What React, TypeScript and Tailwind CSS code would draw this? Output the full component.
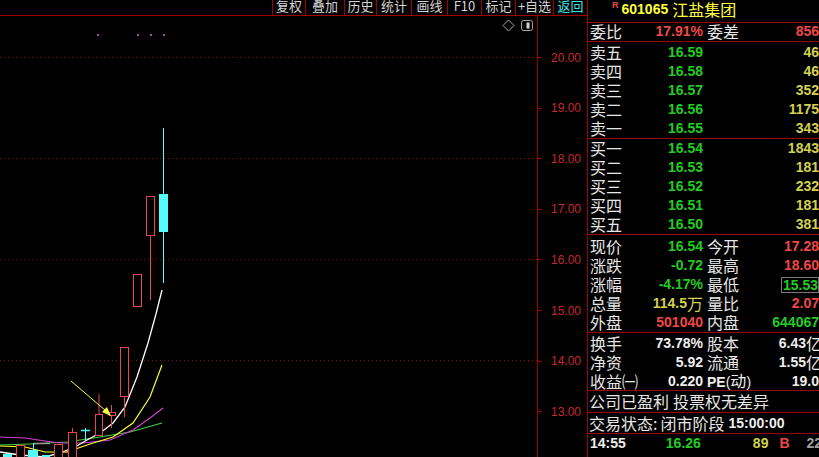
import React from 'react';

const NUM = "font-['Liberation_Sans',Arial,sans-serif] font-bold text-[14px]";

const TOOLS = [
  { label: '复权', cls: 'w-[33px] text-[#d4d4d4]' },
  { label: '叠加', cls: 'w-[39px] text-[#d4d4d4]' },
  { label: '历史', cls: 'w-[32px] text-[#d4d4d4]' },
  { label: '统计', cls: 'w-[35px] text-[#d4d4d4]' },
  { label: '画线', cls: 'w-[36px] text-[#d4d4d4]' },
  { label: 'F10', cls: 'w-[34px] text-[#d4d4d4]' },
  { label: '标记', cls: 'w-[34px] text-[#d4d4d4]' },
  { label: '+自选', cls: 'w-[38px] text-[#d4d4d4]' },
  { label: '返回', cls: 'w-[34px] text-[#3ce6e6]' },
];

const SELL = [
  ['卖五', '16.59', '46'],
  ['卖四', '16.58', '46'],
  ['卖三', '16.57', '352'],
  ['卖二', '16.56', '1175'],
  ['卖一', '16.55', '343'],
];

const BUY = [
  ['买一', '16.54', '1843'],
  ['买二', '16.53', '181'],
  ['买三', '16.52', '232'],
  ['买四', '16.51', '181'],
  ['买五', '16.50', '381'],
];

const AXIS = ['20.00', '19.00', '18.00', '17.00', '16.00', '15.00', '14.00', '13.00'];

// hollow red candles: [x, top, w, h, wickTop, wickBottom, wickX]
const RED_CANDLES = [
  [146.5, 196.5, 8, 39, 196, 300, 150.5],
  [133.5, 274.5, 8, 32, 274, 307, 137.5],
  [120.5, 347.5, 8, 49, 347, 417, 124.5],
  [95.5, 414.5, 7, 21, 394, 436, 99],
  [68.5, 432.5, 8, 30, 428, 462, 72.5],
  [54.5, 444.5, 8, 20, 444, 462, 58.5],
  [16.5, 445.5, 8, 20, 445, 462, 20.5],
];

function Chart() {
  return (
    <svg width="587" height="441" viewBox="0 16 587 441" className="block shrink-0">
      {[57, 158, 259, 360].map(y => (
        <line key={y} x1={0} x2={537} y1={y + 0.5} y2={y + 0.5} stroke="#7a1212" strokeDasharray="1 3" />
      ))}
      <line x1={537.5} x2={537.5} y1={16} y2={457} stroke="#a00000" />
      {AXIS.map((t, i) => {
        const y = 57 + i * 50.6;
        return (
          <g key={t}>
            <line x1={537} x2={542} y1={Math.round(y) + 0.5} y2={Math.round(y) + 0.5} stroke="#a00000" />
            <text x={581} y={y + 4.5} textAnchor="end" fill="#c42a2a" fontSize="12" fontFamily="'Liberation Sans', Arial, sans-serif">{t}</text>
          </g>
        );
      })}

      {/* top-right tool icons */}
      <polygon points="508.5,20 514,25.5 508.5,31 503,25.5" fill="none" stroke="#a8a8a8" />
      <rect x={521.5} y={20.5} width={11} height={10} rx={2} fill="none" stroke="#a8a8a8" />
      <rect x={526.5} y={22.5} width={3} height={6} fill="#d0d0d0" />

      {/* marker dots */}
      {[97, 137, 150, 163].map(x => (
        <rect key={x} x={x} y={34} width={2} height={2} fill="#b040b0" />
      ))}

      {/* moving averages */}
      <polyline fill="none" stroke="#40d040" strokeWidth={1.2}
        points="0,445 30,444 67,442 100,437 130,432 162,423" />
      <polyline fill="none" stroke="#d040d0" strokeWidth={1.2}
        points="0,437 25,438 45,441 60,443 83,443 110,440 133,430 150,418 163,408" />
      <polyline fill="none" stroke="#ffff30" strokeWidth={1.2}
        points="0,446 25,447 45,452 67,452 90,444 113,437 133,423 150,397 162,365" />
      <polyline fill="none" stroke="#ffffff" strokeWidth={1.3}
        points="0,452 20,455 45,457 60,453 75,447 87,440 100,433 113,423 125,407 137,377 148,343 156,314 162,290" />
      <line x1={33} x2={50} y1={443.5} y2={443.5} stroke="#9a9a9a" strokeWidth={1.5} />
      <line x1={65} x2={75} y1={451.5} y2={451.5} stroke="#ff9020" strokeWidth={1.5} />

      {/* red hollow candles */}
      {RED_CANDLES.map(([x, t, w, h, wt, wb, wx], i) => (
        <g key={i} stroke="#e84848" fill="none">
          <line x1={wx} x2={wx} y1={wt} y2={t} />
          <line x1={wx} x2={wx} y1={t + h} y2={wb} />
          <rect x={x} y={t} width={w} height={h} fill="#000" />
        </g>
      ))}
      {/* small doji */}
      <line x1={111.5} x2={111.5} y1={405} y2={428} stroke="#e84848" />
      <rect x={109.5} y={412.5} width={6} height={3} fill="#000" stroke="#e84848" />

      {/* cyan candles */}
      <line x1={163.5} x2={163.5} y1={128} y2={283} stroke="#54fcfc" />
      <rect x={159} y={194} width={9} height={38} fill="#54fcfc" />
      <line x1={81} x2={90} y1={430.5} y2={430.5} stroke="#54fcfc" strokeWidth={1.5} />
      <line x1={85.5} x2={85.5} y1={428} y2={440} stroke="#54fcfc" />
      <line x1={33.5} x2={33.5} y1={443} y2={450} stroke="#54fcfc" />
      <rect x={28} y={450} width={10} height={8} fill="#54fcfc" />
      <rect x={3} y={454} width={9} height={4} fill="#54fcfc" />
      <rect x={42} y={455} width={8} height={3} fill="#54fcfc" />

      {/* arrow */}
      <line x1={71} y1={381} x2={106} y2={411} stroke="#ffff40" />
      <polygon points="111,416 102,412 107,407" fill="#ffff40" />
    </svg>
  );
}

function Num({ children, cls }: { children: React.ReactNode; cls: string }) {
  return <span className={`${NUM} ${cls}`}>{children}</span>;
}

function Pair({ l1, v1, l2, v2 }: { l1: React.ReactNode; v1: React.ReactNode; l2: React.ReactNode; v2: React.ReactNode }) {
  return (
    <div className="flex h-[19px] items-center leading-[19px]">
      <div className="flex w-[115px] items-center justify-between pl-[2px]">
        <span className="text-[16px] text-[#e6e6e6]">{l1}</span>
        {v1}
      </div>
      <div className="ml-[4px] flex flex-1 items-center justify-between whitespace-nowrap">
        <span className="text-[16px] text-[#e6e6e6]">{l2}</span>
        {v2}
      </div>
    </div>
  );
}

function Book({ rows }: { rows: string[][] }) {
  return (
    <>
      {rows.map(([l, p, v]) => (
        <div key={l} className="flex h-[19px] items-center leading-[19px]">
          <div className="flex w-[115px] items-center justify-between pl-[2px]">
            <span className="text-[16px] text-[#e6e6e6]">{l}</span>
            <Num cls="text-[#22cc22]">{p}</Num>
          </div>
          <div className="flex flex-1 justify-end">
            <Num cls="text-[#d2d24e]">{v}</Num>
          </div>
        </div>
      ))}
    </>
  );
}

export default function App() {
  return (
    <div className="flex h-[457px] w-[819px] overflow-hidden bg-black font-['Noto_Sans_CJK_SC',sans-serif]">
      {/* chart side */}
      <div className="flex w-[587px] shrink-0 flex-col">
        <div className="flex h-[16px] shrink-0 justify-end border-b border-[#a00000]">
          {TOOLS.map(t => (
            <div key={t.label} className={`flex h-full items-start justify-center border-l border-[#a00000] text-[13px] leading-[12px] ${t.cls}`}>
              {t.label}
            </div>
          ))}
        </div>
        <Chart />
      </div>

      {/* quote panel */}
      <div className="flex w-[232px] shrink-0 flex-col overflow-hidden border-l border-[#a00000]">
        <div className="flex h-[23px] shrink-0 items-start border-b border-[#a00000] pl-[24px] pt-[1px]">
          <span className="font-['Liberation_Sans',Arial,sans-serif] text-[9px] font-bold leading-[9px] text-[#f04848]">R</span>
          <span className="ml-[3px] font-['Liberation_Sans',Arial,sans-serif] text-[14px] font-bold leading-[16px] text-[#ffff3c]">601065</span>
          <span className="ml-[4px] text-[16px] leading-[16px] text-[#ffff3c]">江盐集团</span>
        </div>

        <div className="h-[19px] shrink-0 border-b border-[#a00000]">
          <div className="-mt-[1px]">
            <Pair l1="委比" v1={<Num cls="text-[#f04848]">17.91%</Num>} l2="委差" v2={<Num cls="text-[#f04848]">856</Num>} />
          </div>
        </div>

        <div className="h-[97px] shrink-0 border-b border-[#a00000] pt-[1px]">
          <Book rows={SELL} />
        </div>

        <div className="h-[96px] shrink-0 border-b border-[#a00000]">
          <Book rows={BUY} />
        </div>

        <div className="h-[98px] shrink-0 border-b border-[#a00000] pt-[2px]">
          <Pair l1="现价" v1={<Num cls="text-[#22cc22]">16.54</Num>} l2="今开" v2={<Num cls="text-[#f04848]">17.28</Num>} />
          <Pair l1="涨跌" v1={<Num cls="text-[#22cc22]">-0.72</Num>} l2="最高" v2={<Num cls="text-[#f04848]">18.60</Num>} />
          <Pair
            l1="涨幅"
            v1={<Num cls="text-[#22cc22]">-4.17%</Num>}
            l2="最低"
            v2={<span className="flex h-[16px] items-center border border-[#7a7a7a] pl-[1px]"><Num cls="text-[#22cc22] leading-[14px]">15.53</Num></span>}
          />
          <Pair
            l1="总量"
            v1={<span className="flex items-center text-[#d2d24e]"><Num cls="">114.5</Num><span className="text-[16px]">万</span></span>}
            l2="量比"
            v2={<Num cls="text-[#f04848]">2.07</Num>}
          />
          <Pair l1="外盘" v1={<Num cls="text-[#f04848]">501040</Num>} l2="内盘" v2={<Num cls="text-[#22cc22]">644067</Num>} />
        </div>

        <div className="h-[58px] shrink-0 border-b border-[#a00000] pt-[1px]">
          <Pair
            l1="换手"
            v1={<Num cls="text-[#eeeeee]">73.78%</Num>}
            l2="股本"
            v2={<span className="-mr-[3px] flex items-center text-[#eeeeee]"><Num cls="">6.43</Num><span className="text-[16px]">亿</span></span>}
          />
          <Pair
            l1="净资"
            v1={<Num cls="text-[#eeeeee]">5.92</Num>}
            l2="流通"
            v2={<span className="-mr-[3px] flex items-center text-[#eeeeee]"><Num cls="">1.55</Num><span className="text-[16px]">亿</span></span>}
          />
          <Pair
            l1="收益㈠"
            v1={<Num cls="text-[#eeeeee]">0.220</Num>}
            l2={<Num cls="text-[#eeeeee]">PE<span className="font-normal">(</span><span className="font-['Noto_Sans_CJK_SC',sans-serif] text-[16px] font-normal">动</span><span className="font-normal">)</span></Num>}
            v2={<Num cls="text-[#eeeeee]">19.0</Num>}
          />
        </div>

        <div className="flex h-[22px] shrink-0 items-center border-b border-[#a00000] pl-[1px] text-[16px] leading-[19px] text-[#e6e6e6]">
          公司已盈利<span className="ml-[4px]">投票权无差异</span>
        </div>

        <div className="flex h-[21px] shrink-0 items-center border-b border-[#a00000] pl-[1px] text-[16px] leading-[19px] text-[#e6e6e6]">
          交易状态:<span className="ml-[3px]">闭市阶段</span>
          <Num cls="ml-[4px] text-[#eeeeee]">15:00:00</Num>
        </div>

        <div className="flex h-[19px] shrink-0 items-center whitespace-nowrap pl-[2px] leading-[19px]">
          <Num cls="w-[36px] text-[#eeeeee]">14:55</Num>
          <Num cls="ml-[40px] text-[#22cc22]">16.26</Num>
          <Num cls="ml-[52px] text-[#d2d24e]">89</Num>
          <Num cls="ml-[11px] text-[#f04848]">B</Num>
          <Num cls="ml-[17px] text-[#a0a0a0]">22</Num>
        </div>
        <div className="flex h-[19px] shrink-0 items-center whitespace-nowrap pl-[2px] leading-[19px]">
          <Num cls="w-[36px] text-[#eeeeee]">14:56</Num>
          <Num cls="ml-[40px] text-[#22cc22]">16.26</Num>
          <Num cls="ml-[44px] text-[#d2d24e]">104</Num>
          <Num cls="ml-[11px] text-[#22cc22]">S</Num>
          <Num cls="ml-[17px] text-[#a0a0a0]">15</Num>
        </div>
      </div>
    </div>
  );
}
